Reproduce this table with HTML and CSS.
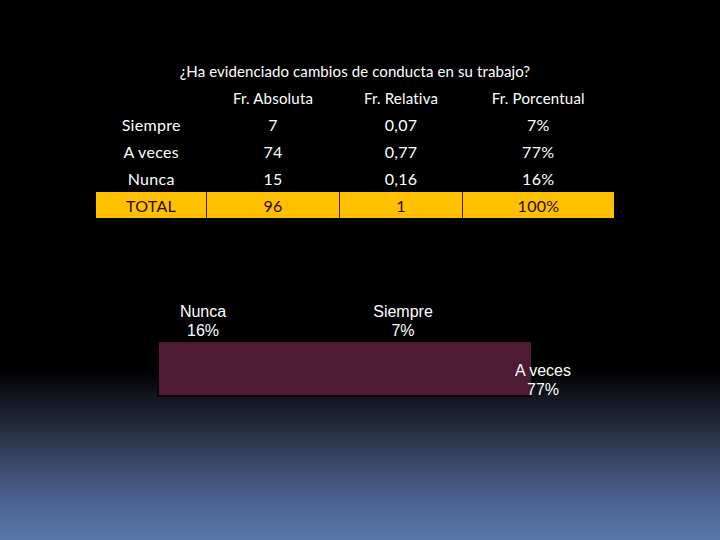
FILE: index.html
```html
<!DOCTYPE html>
<html>
<head>
<meta charset="utf-8">
<link rel="stylesheet" href="styles.css">
</head>
<body>
<div class="slide">
  <h1 class="title">¿Ha evidenciado cambios de conducta en su trabajo?</h1>
  <table class="freq">
    <tr class="head"><td></td><td>Fr. Absoluta</td><td>Fr. Relativa</td><td>Fr. Porcentual</td></tr>
    <tr><td class="lbl">Siempre</td><td>7</td><td>0,07</td><td>7%</td></tr>
    <tr><td class="lbl">A veces</td><td>74</td><td>0,77</td><td>77%</td></tr>
    <tr><td class="lbl">Nunca</td><td>15</td><td>0,16</td><td>16%</td></tr>
    <tr class="total"><td>TOTAL</td><td>96</td><td>1</td><td>100%</td></tr>
  </table>
  <div class="chart">
    <div class="bar"></div>
    <div class="dl dl-nunca">Nunca<br>16%</div>
    <div class="dl dl-siempre">Siempre<br>7%</div>
    <div class="dl dl-aveces">A veces<br>77%</div>
  </div>
</div>
</body>
</html>
```
FILE: styles.css
```css
html, body { margin: 0; padding: 0; }
body {
  width: 720px; height: 540px; overflow: hidden;
  background: linear-gradient(to bottom, #000 0px, #000 370px, #0f121a 392px, #1e2535 420px, #3a4968 462px, #4a6290 500px, #5a76aa 540px);
}
.slide { width: 720px; height: 540px; position: relative; }
.title {
  margin: 0; padding-top: 61px;
  text-align: center;
  font: normal 15px "Lato", "Open Sans", sans-serif;
  color: #fff;
  width: 710px;
  line-height: 20px;
  letter-spacing: 0.1px;
}
.freq {
  margin: 3px 0 0 96px;
  border-collapse: collapse;
  font: 16px "Lato", "Open Sans", sans-serif;
  letter-spacing: 0.3px;
  color: #fff;
}
.freq .head td { font-size: 15px; letter-spacing: 0.2px; }
.freq td { height: 27px; padding: 0; text-align: center; vertical-align: middle; }
.freq td:nth-child(1) { width: 110px; }
.freq td:nth-child(2) { width: 132px; }
.freq td:nth-child(3) { width: 122px; }
.freq td:nth-child(4) { width: 151px; }
.freq .total td {
  background: #ffc000; color: #2a0a00;
  border-left: 1px solid #3a2400; height: 26px;
}
.freq .total td:first-child { border-left: none; }
.chart { position: relative; height: 200px; }
.bar {
  position: absolute; left: 157px; top: 124px;
  width: 372px; height: 53px;
  background: #4d1b33;
  border-left: 2px solid #120008; border-bottom: 2px solid #120008;
}
.dl {
  position: absolute; text-align: center;
  font: 16px "Liberation Sans", Arial, sans-serif;
  color: #fff; line-height: 19px; width: 80px;
}
.dl-nunca { left: 163px; top: 84px; }
.dl-siempre { left: 363px; top: 84px; }
.dl-aveces { left: 503px; top: 143px; }
```
